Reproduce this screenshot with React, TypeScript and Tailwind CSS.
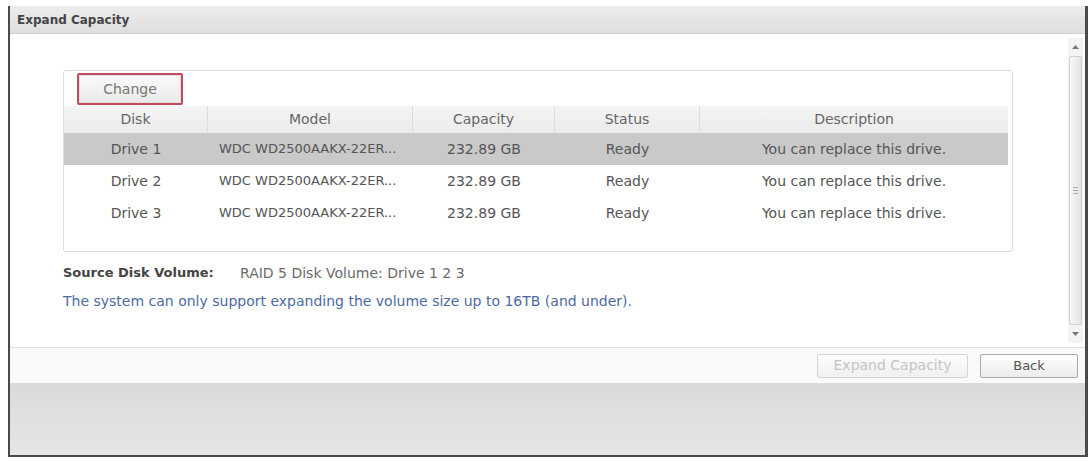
import React from 'react';

const DRIVES = [
    { disk: 'Drive 1', model: 'WDC WD2500AAKX-22ER...', capacity: '232.89 GB', status: 'Ready', desc: 'You can replace this drive.' },
    { disk: 'Drive 2', model: 'WDC WD2500AAKX-22ER...', capacity: '232.89 GB', status: 'Ready', desc: 'You can replace this drive.' },
    { disk: 'Drive 3', model: 'WDC WD2500AAKX-22ER...', capacity: '232.89 GB', status: 'Ready', desc: 'You can replace this drive.' },
];

const HEADERS = ['Disk', 'Model', 'Capacity', 'Status', 'Description'];

const GRID = 'grid grid-cols-[144px_205px_142px_145px_1fr]';

function Scrollbar() {
    return (
        <div className="mr-[2px] mt-[4px] mb-[4px] flex w-[15px] flex-col items-center bg-[#f3f3f3]">
            <div className="flex h-[18px] w-full items-center justify-center">
                <svg width="7" height="4" viewBox="0 0 7 4">
                    <path d="M0 4 L3.5 0 L7 4 Z" fill="#777" />
                </svg>
            </div>
            <div className="flex w-[13px] flex-1 items-center justify-center rounded-[2px] border border-[#d0d0d0] bg-gradient-to-r from-[#f8f8f8] to-[#e4e4e4]">
                <div className="flex flex-col gap-[2px]">
                    <div className="h-px w-[5px] bg-[#aaa]" />
                    <div className="h-px w-[5px] bg-[#aaa]" />
                    <div className="h-px w-[5px] bg-[#aaa]" />
                </div>
            </div>
            <div className="flex h-[18px] w-full items-center justify-center">
                <svg width="7" height="4" viewBox="0 0 7 4">
                    <path d="M0 0 L3.5 4 L7 0 Z" fill="#777" />
                </svg>
            </div>
        </div>
    );
}

export default function App() {
    return (
        <div className="h-[462px] w-[1092px] overflow-hidden bg-white pl-[8px] pt-[6px] font-['DejaVu_Sans',sans-serif]">
            <div className="flex h-[451px] w-[1080px] flex-col border-b-2 border-l-2 border-r-[3px] border-[#4a4a4a] bg-white">
                {/* Title bar */}
                <div className="flex h-[28px] shrink-0 items-center border-b border-[#cfcfcf] bg-gradient-to-b from-[#ececec] to-[#dedede] pl-[7px] text-[12px] font-bold text-[#444]">
                    Expand Capacity
                </div>

                {/* Content */}
                <div className="flex h-[313px] shrink-0">
                    <div className="flex-1 pl-[53px] pt-[36px]">
                        <div className="h-[182px] w-[950px] rounded-[3px] border border-[#dcdcdc] bg-white">
                            <div className="h-[35px] pl-[13px] pt-[2px]">
                                <button className="flex h-[32px] w-[106px] items-center justify-center rounded-[2px] border-2 border-[#c24a5a] bg-gradient-to-b from-[#fbfbfb] to-[#e9e9e9] text-[14px] text-[#777] shadow-[inset_0_0_0_1px_#e0e0e0]">
                                    Change
                                </button>
                            </div>
                            <div className="mr-[4px]">
                                <div className={`${GRID} h-[27px] bg-gradient-to-b from-[#f5f5f5] to-[#ebebeb] text-[14px] text-[#666]`}>
                                    {HEADERS.map((h, i) => (
                                        <div
                                            key={h}
                                            className={`flex items-center justify-center ${i < HEADERS.length - 1 ? 'border-r border-[#dcdcdc]' : ''}`}
                                        >
                                            {h}
                                        </div>
                                    ))}
                                </div>
                                {DRIVES.map((d, i) => (
                                    <div
                                        key={d.disk}
                                        className={`${GRID} h-[32px] items-center text-[14px] text-[#555] ${i === 0 ? 'bg-[#c9c9c9]' : 'bg-white'}`}
                                    >
                                        <div className="text-center">{d.disk}</div>
                                        <div className="whitespace-nowrap pl-[11px] text-[13px]">{d.model}</div>
                                        <div className="text-center">{d.capacity}</div>
                                        <div className="text-center">{d.status}</div>
                                        <div className="text-center">{d.desc}</div>
                                    </div>
                                ))}
                            </div>
                        </div>

                        <div className="mt-[13px] flex items-center leading-[16px]">
                            <span className="w-[177px] text-[13px] font-bold text-[#444]">Source Disk Volume:</span>
                            <span className="text-[14px] text-[#6a6a6a]">RAID 5 Disk Volume: Drive 1 2 3</span>
                        </div>
                        <div className="mt-[12px] text-[14px] leading-[16px] text-[#4d6aa3]">
                            The system can only support expanding the volume size up to 16TB (and under).
                        </div>
                    </div>
                    <Scrollbar />
                </div>

                {/* Footer */}
                <div className="flex h-[36px] shrink-0 items-center justify-end gap-[12px] border-t border-[#dedede] bg-[#fafafa] pr-[7px]">
                    <button
                        disabled
                        className="h-[24px] w-[151px] rounded-[2px] border border-[#d4d4d4] bg-gradient-to-b from-[#fdfdfd] to-[#f0f0f0] text-[14px] text-[#c4c4c4]"
                    >
                        Expand Capacity
                    </button>
                    <button className="h-[24px] w-[98px] rounded-[2px] border border-[#a8a8a8] bg-gradient-to-b from-[#fefefe] to-[#ececec] text-[13px] text-[#555]">
                        Back
                    </button>
                </div>

                {/* Bottom gray area */}
                <div className="flex-1 bg-gradient-to-b from-[#dadada] to-[#e6e6e6]" />
            </div>
        </div>
    );
}
